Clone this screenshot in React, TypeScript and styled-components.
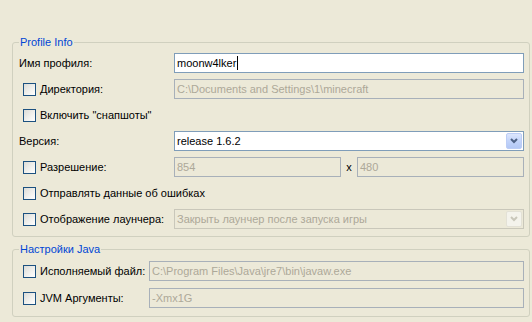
import React from "react";
import styled, { createGlobalStyle, css } from "styled-components";

const GlobalStyle = createGlobalStyle`
  html, body { margin: 0; padding: 0; background: #ECE9D8; }
  body {
    font-family: "Liberation Sans", Arial, sans-serif;
    font-size: 11px;
    color: #000;
  }
`;

const Page = styled.div`
  width: 532px;
  height: 322px;
  box-sizing: border-box;
  padding: 36px 2px 0 12px;
  display: flex;
  flex-direction: column;
  gap: 6px;
`;

const Group = styled.fieldset<{ $pt: number; $pb: number }>`
  margin: 0;
  min-width: 0;
  box-sizing: border-box;
  width: 518px;
  border: 1px solid #D0D0BF;
  border-radius: 3px;
  padding: ${(p) => p.$pt}px 5px ${(p) => p.$pb}px 6px;
`;

const Title = styled.legend`
  padding: 0 1px;
  line-height: 13px;
  font-size: 11px;
  color: #0046D5;
`;

const Form = styled.div<{ $label: number; $gap: number }>`
  display: grid;
  grid-template-columns: ${(p) => p.$label}px 1fr;
  grid-auto-rows: 20px;
  row-gap: ${(p) => p.$gap}px;
  align-items: center;
`;

const Label = styled.div<{ $wide?: boolean }>`
  display: flex;
  align-items: center;
  gap: 4px;
  white-space: nowrap;
  line-height: 13px;
  ${(p) => p.$wide && css`grid-column: 1 / span 2;`}
`;

const Check = styled.span`
  display: inline-block;
  box-sizing: border-box;
  width: 13px;
  height: 13px;
  margin-left: 4px;
  border: 1px solid #1C5180;
  background: linear-gradient(135deg, #DCDCD7 0%, #F2F2EF 60%, #FFFFFF 100%);
  flex: none;
`;

const fieldBox = css`
  box-sizing: border-box;
  height: 20px;
  display: flex;
  align-items: center;
  padding: 0 2px;
  line-height: 13px;
  white-space: nowrap;
  overflow: hidden;
`;

const Field = styled.div<{ $disabled?: boolean }>`
  ${fieldBox};
  border: 1px solid ${(p) => (p.$disabled ? "#A8B0B9" : "#7F9DB9")};
  background: ${(p) => (p.$disabled ? "#ECE9D8" : "#FFFFFF")};
  color: ${(p) => (p.$disabled ? "#ACA899" : "#000")};
  min-width: 0;
`;

const Caret = styled.span`
  display: inline-block;
  width: 1px;
  height: 14px;
  background: #000;
  margin-left: 1px;
`;

const Combo = styled.div<{ $disabled?: boolean }>`
  ${fieldBox};
  padding: 0 1px 0 2px;
  border: 1px solid ${(p) => (p.$disabled ? "#C9C7BA" : "#7F9DB9")};
  background: ${(p) => (p.$disabled ? "#ECE9D8" : "#FFFFFF")};
  color: ${(p) => (p.$disabled ? "#ACA899" : "#000")};
  justify-content: space-between;
`;

const ComboButton = styled.span<{ $disabled?: boolean }>`
  box-sizing: border-box;
  width: 16px;
  height: 16px;
  display: flex;
  align-items: center;
  justify-content: center;
  border-radius: 2px;
  flex: none;
  ${(p) =>
    p.$disabled
      ? css`
          border: 1px solid #E3E1D6;
          background: #F4F3EC;
          color: #C9C7BA;
        `
      : css`
          border: 1px solid #BCCDF6;
          background: linear-gradient(180deg, #DCE6FD 0%, #C3D4FA 50%, #B3C8F6 100%);
          color: #4D6185;
        `}
`;

const Pair = styled.div`
  display: flex;
  align-items: center;
`;

const Times = styled.span`
  width: 16px;
  flex: none;
  text-align: center;
  line-height: 13px;
`;

const PairField = styled(Field)`
  flex: 1;
`;

const Chevron = () => (
  <svg width="8" height="6" viewBox="0 0 8 6">
    <path d="M1 1 L4 4 L7 1" fill="none" stroke="currentColor" strokeWidth="2" />
  </svg>
);

export default function App() {
  return (
    <>
      <GlobalStyle />
      <Page>
        <Group $pt={4} $pb={7}>
          <Title>Profile Info</Title>
          <Form $label={155} $gap={6}>
            <Label>Имя профиля:</Label>
            <Field>
              moonw4lker
              <Caret />
            </Field>

            <Label>
              <Check />
              Директория:
            </Label>
            <Field $disabled>C:\Documents and Settings\1\minecraft</Field>

            <Label $wide>
              <Check />
              Включить "снапшоты"
            </Label>

            <Label>Версия:</Label>
            <Combo>
              release 1.6.2
              <ComboButton>
                <Chevron />
              </ComboButton>
            </Combo>

            <Label>
              <Check />
              Разрешение:
            </Label>
            <Pair>
              <PairField $disabled>854</PairField>
              <Times>x</Times>
              <PairField $disabled>480</PairField>
            </Pair>

            <Label $wide>
              <Check />
              Отправлять данные об ошибках
            </Label>

            <Label>
              <Check />
              Отображение лаунчера:
            </Label>
            <Combo $disabled>
              Закрыть лаунчер после запуска игры
              <ComboButton $disabled>
                <Chevron />
              </ComboButton>
            </Combo>
          </Form>
        </Group>

        <Group $pt={5} $pb={8}>
          <Title>Настройки Java</Title>
          <Form $label={130} $gap={7}>
            <Label>
              <Check />
              Исполняемый файл:
            </Label>
            <Field $disabled>C:\Program Files\Java\jre7\bin\javaw.exe</Field>

            <Label>
              <Check />
              JVM Аргументы:
            </Label>
            <Field $disabled>-Xmx1G</Field>
          </Form>
        </Group>
      </Page>
    </>
  );
}
